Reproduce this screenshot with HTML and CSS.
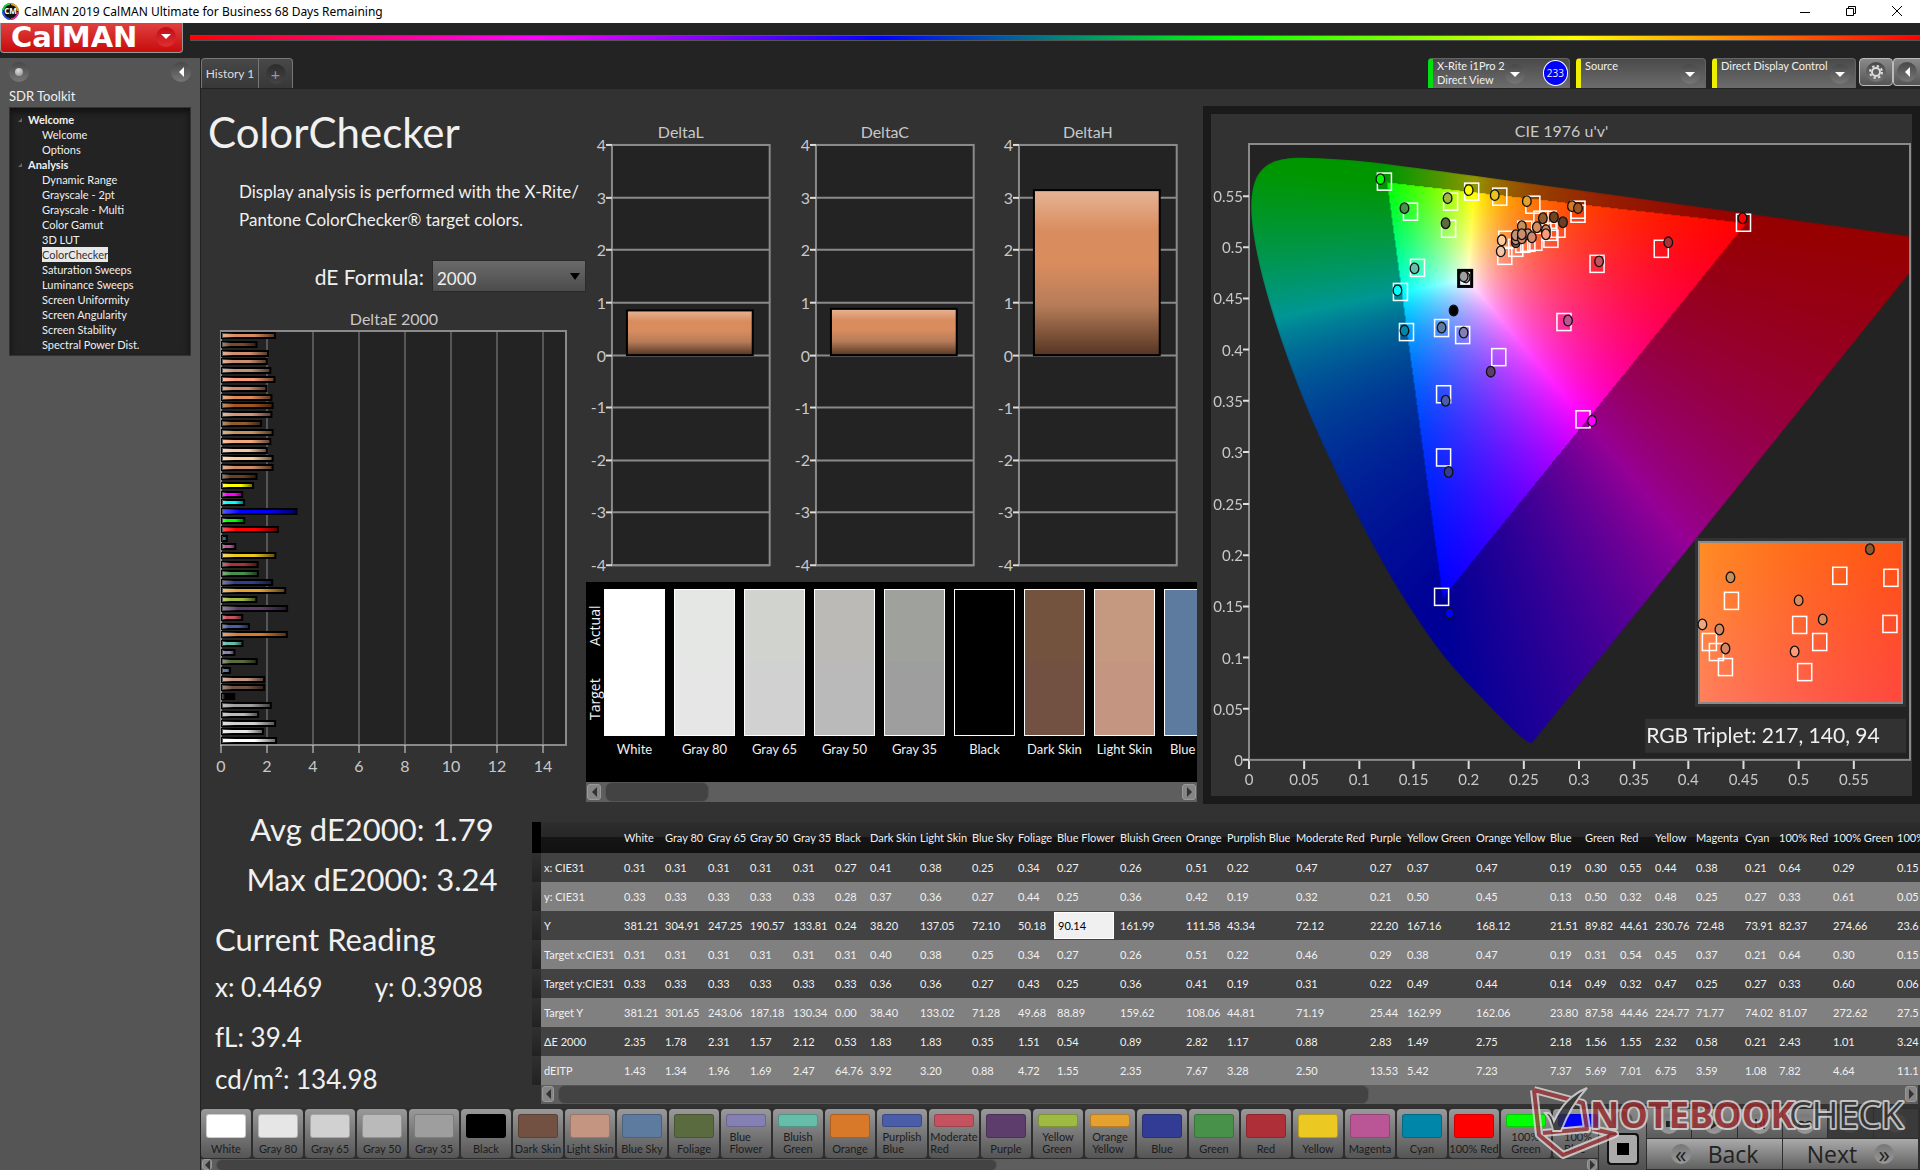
FILE: index.html
```html
<!DOCTYPE html>
<html lang="en">
  <head>
    <meta charset="utf-8" />
    <meta name="viewport" content="width=device-width, initial-scale=1" />
    <title>CalMAN 2019</title>
    <link rel="stylesheet" href="styles.css">
  </head>
  <body>
    <!-- Window title bar -->
    <div class="titlebar">
      <svg class="app-icon" width="17" height="17" viewBox="0 0 17 17" aria-hidden="true">
        <circle cx="8.500" cy="8.500" r="8" fill="#111" stroke="#0a8" />
        <path d="M1 7a8 8 0 0 1 7-6" stroke="#2c3" fill="none" stroke-width="2" />
        <path d="M9 1a8 8 0 0 1 7 7" stroke="#e0a020" fill="none" stroke-width="2" />
        <path d="M16 9a8 8 0 0 1-7 7" stroke="#d22a8a" fill="none" stroke-width="2" />
        <path d="M8 16a8 8 0 0 1-7-7" stroke="#2a50e0" fill="none" stroke-width="2" />
        <text x="8.500" y="11" text-anchor="middle">CM</text>
      </svg>
      <span class="window-title">CalMAN 2019 CalMAN Ultimate for Business 68 Days Remaining</span>
      <div class="window-buttons">
        <button aria-label="Minimize"><svg width="12" height="12"><path d="M1 7.500h10" stroke="#000" /></svg></button>
        <button aria-label="Restore"><svg width="12" height="12"><path d="M1.500 3.500h7v7h-7zM3.500 3.500v-2h7v7h-2" stroke="#000" fill="none" /></svg></button>
        <button aria-label="Close"><svg width="12" height="12"><path d="M1 1l10 10M11 1L1 11" stroke="#000" /></svg></button>
      </div>
    </div>

    <header class="brandbar">
      <button class="logo">CalMAN <span class="round red"><span class="tri-down"></span></span></button>
      <div class="rainbow"></div>
    </header>

    <div class="shell">
      <aside class="sidebar">
        <div class="sidebar-top">
          <button class="round" aria-label="Record"><span class="pearl"></span></button>
          <button class="round" aria-label="Collapse"><span class="tri-left"></span></button>
        </div>
        <div class="toolkit">SDR Toolkit</div>
        <nav class="tree">
          <strong>Welcome</strong>
          <a href="#">Welcome</a>
          <a href="#">Options</a>
          <strong>Analysis</strong>
          <a href="#">Dynamic Range</a>
          <a href="#">Grayscale - 2pt</a>
          <a href="#">Grayscale - Multi</a>
          <a href="#">Color Gamut</a>
          <a href="#">3D LUT</a>
          <a href="#" class="current">ColorChecker</a>
          <a href="#">Saturation Sweeps</a>
          <a href="#">Luminance Sweeps</a>
          <a href="#">Screen Uniformity</a>
          <a href="#">Screen Angularity</a>
          <a href="#">Screen Stability</a>
          <a href="#">Spectral Power Dist.</a>
        </nav>
      </aside>

      <div class="content">
        <div class="toolbar">
          <div class="tabs">
            <button class="tab">History 1</button>
            <button class="tab add" aria-label="Add tab"><span class="round dark">+</span></button>
          </div>
          <div class="devices">
            <div class="device meter">
              <span>X-Rite i1Pro 2<br>Direct View</span>
              <button class="round" aria-label="Meter options"><span class="tri-down"></span></button>
              <span class="count">233</span>
            </div>
            <div class="device source">
              <span>Source</span>
              <button class="round" aria-label="Source options"><span class="tri-down"></span></button>
            </div>
            <div class="device display">
              <span>Direct Display Control</span>
              <button class="round" aria-label="Display options"><span class="tri-down"></span></button>
            </div>
            <button class="tool" aria-label="Settings">
              <span class="round">
                <svg width="16" height="16" viewBox="-8 -8 16 16"><circle r="4" fill="none" stroke="#ddd" stroke-width="2" /><circle r="6" fill="none" stroke="#ddd" stroke-width="2" stroke-dasharray="2.400 2.310" /></svg>
              </span>
            </button>
            <button class="tool last" aria-label="Collapse toolbar"><span class="round"><span class="tri-left"></span></span></button>
          </div>
        </div>

        <main class="workspace">
          <div class="upper">
            <section class="summary">
              <h1>ColorChecker</h1>
              <p>Display analysis is performed with the X-Rite/<br>Pantone ColorChecker&reg; target colors.</p>
              <div class="formula">
                <label for="formula">dE Formula:</label>
                <div class="select-box">
                  <select id="formula"><option>2000</option></select>
                </div>
              </div>
              <svg id="deltaE" class="chart" viewBox="0 0 385 480"></svg>
            </section>

            <section class="middle">
              <div class="deltas" id="deltas"></div>
              <div class="swatches">
                <div class="swatch-row">
                  <div class="side-labels"><span>Target</span><span>Actual</span></div>
                  <div class="swatch-list" id="swatches"></div>
                </div>
                <div class="scrollbar tall"><button aria-label="Scroll left"><span class="tri-left"></span></button><span class="thumb short"></span><button aria-label="Scroll right"><span class="tri-right"></span></button></div>
              </div>
            </section>

            <section class="cie">
              <h2>CIE 1976 u'v'</h2>
              <div class="plot">
                <canvas id="locus" width="659" height="614"></canvas>
                <canvas id="detail" width="203" height="161"></canvas>
                <svg id="ciePoints" viewBox="0 0 659 614"></svg>
              </div>
            </section>
          </div>

          <div class="lower">
            <section class="reading">
              <div class="big">Avg dE2000: 1.79</div>
              <div class="big">Max dE2000: 3.24</div>
              <h3>Current Reading</h3>
              <div class="pair"><span>x: 0.4469</span><span>y: 0.3908</span></div>
              <div class="fl">fL: 39.4</div>
              <div>cd/m²: 134.98</div>
            </section>
            <section class="results">
              <div class="table-clip"><table id="results"></table></div>
              <div class="scrollbar"><button aria-label="Scroll left"><span class="tri-left"></span></button><span class="thumb wide"></span><button aria-label="Scroll right"><span class="tri-right"></span></button></div>
            </section>
          </div>
        </main>

        <footer class="footer">
          <div class="patterns">
            <div class="pattern-list" id="patterns"></div>
            <div class="scrollbar thin"><button aria-label="Scroll left"><span class="tri-left"></span></button><span class="thumb half"></span><button aria-label="Scroll right"><span class="tri-right"></span></button></div>
          </div>
          <div class="stop-box">
            <span class="round up"></span>
            <button class="stop" aria-label="Show pattern"></button>
          </div>
          <div class="transport">
            <div class="transport-row">
              <button aria-label="Stop"><span class="round"><svg width="12" height="12"><path d="M3 3h6v6H3z" /></svg></span></button>
              <button aria-label="Play"><span class="round"><svg width="12" height="12"><path d="M3 1l8 5-8 5z" /></svg></span></button>
              <button aria-label="Step"><span class="round"><svg width="12" height="12"><path d="M1 1h2v10H1zM9 1h2v10H9zM4 6l4-3v6z" /></svg></span></button>
              <button aria-label="Loop"><span class="round"><svg width="14" height="12"><path d="M7 6C5 3 1 3 1 6s4 3 6 0 6-3 6 0-4 3-6 0" fill="none" stroke="#222" stroke-width="2" /></svg></span></button>
              <button aria-label="Refresh" disabled><span class="round dark"></span></button>
              <button aria-label="More" disabled><span class="round dark"></span></button>
            </div>
            <div class="nav-row">
              <button><span class="round">«</span>Back</button>
              <button>Next<span class="round">»</span></button>
            </div>
          </div>
          <!-- Watermark lies over the footer -->
          <svg class="watermark" width="384" height="76" viewBox="0 0 384 76" aria-hidden="true">
            <g fill="none" stroke-linejoin="round">
              <path d="M5 5L54 18L58 44L14 48M5 5L10 50L34 70L86 49L64 44" stroke="#ddd" stroke-width="8" />
              <path d="M5 5L54 18L58 44L14 48M5 5L10 50L34 70L86 49L64 44" stroke="#a33a3d" stroke-width="4" />
            </g>
            <path d="M16 28q6-2 9 8Q36 12 58 3Q42 20 32 46h-8Q22 34 16 28z" fill="#333" stroke="#ddd" stroke-width="2" />
            <text x="61" y="43" class="mark-red">NOTEBOOK</text>
            <text x="260" y="43" class="mark-gray">CHECK</text>
          </svg>
        </footer>
      </div>
    </div>
    <script src="script.js"></script>
  </body>
</html>
```
FILE: styles.css
```css
:root {
  --bg: #323232;
  --dark: #232323;
  --panel: #555555;
  --line: #8a8a8a;
  --text: #f0f0f0;
  --muted: #c8c8c8;
  --font: Lato, "Open Sans", sans-serif;
  --font-wide: "Open Sans", sans-serif;
}

*,
*::before,
*::after {
  margin: 0;
  padding: 0;
  box-sizing: border-box;
}

body {
  min-height: 100vh;
  display: flex;
  flex-direction: column;
  font-family: var(--font);
  font-size: 11px;
  color: var(--text);
  background: var(--dark);
  overflow-x: hidden;
}

button {
  font: inherit;
  color: inherit;
  border: 0;
  background: none;
}

/* Title bar */
.titlebar {
  display: flex;
  align-items: center;
  height: 23px;
  padding-left: 2px;
  color: #000;
  background: #fff;
}

.app-icon text {
  font: bold 8px var(--font-wide);
  fill: #fff;
}

.window-title {
  flex: 1;
  margin-left: 5px;
  font-family: "Noto Sans", sans-serif;
  font-size: 12px;
}

.window-buttons {
  display: flex;
}

.window-buttons button {
  width: 46px;
  height: 22px;
}

/* Brand bar */
.brandbar {
  display: flex;
  height: 35px;
}

.logo {
  display: flex;
  align-items: center;
  justify-content: space-between;
  width: 183px;
  height: 30px;
  padding: 0 6px 2px 10px;
  font: bold 29px/24px "DejaVu Sans", sans-serif;
  color: #fff;
  background: linear-gradient(#e04040, #c80c0c);
  border: 1px solid #999;
  border-top: 0;
  border-radius: 0 0 4px 4px;
}

.rainbow {
  flex: 1;
  height: 6px;
  margin: 12px 0 0 7px;
  border: solid #555;
  border-width: 1px 0;
  background: linear-gradient(90deg, #f00, #f0f 20%, #00f 40%, #0f0 60%, #ff0 80%, #f00);
}

/* Round glossy buttons */
.round {
  display: inline-flex;
  align-items: center;
  justify-content: center;
  flex: none;
  width: 20px;
  height: 20px;
  border-radius: 50%;
  background: linear-gradient(#484848, #777);
}

.round.red {
  background: linear-gradient(#c00a18, #e03030);
}

.round.dark {
  font-size: 16px;
  color: #999;
  background: linear-gradient(#2c2c2c, #444);
}

.pearl {
  width: 8px;
  height: 8px;
  border-radius: 50%;
  background: radial-gradient(circle at 40% 30%, #ddd, #888);
}

.tri-left,
.tri-right {
  border: 5px solid transparent;
  border-left-width: 0;
  border-right-color: #fff;
}

.tri-right {
  border-left-width: 5px;
  border-right-width: 0;
  border-left-color: #fff;
}

.tri-down {
  border: 5px solid transparent;
  border-bottom-width: 0;
  border-top-color: #fff;
}

/* Shell */
.shell {
  flex: 1;
  display: grid;
  grid-template-columns: 201px minmax(0, 1fr);
}

.sidebar {
  padding: 4px 9px;
  background: var(--panel);
  border-right: 1px solid #222;
}

.sidebar-top {
  display: flex;
  justify-content: space-between;
}

.toolkit {
  margin: 6px 0 3px;
  font-size: 13px;
  line-height: 16px;
}

.tree {
  display: flex;
  flex-direction: column;
  align-items: flex-start;
  padding: 4px 0 3px 18px;
  line-height: 15px;
  background: var(--dark);
  border: 1px solid #333;
  box-shadow: inset 0 4px 6px #111;
}

.tree strong {
  display: flex;
  align-items: center;
  gap: 6px;
  height: 15px;
  margin-left: -10px;
}

.tree strong::before {
  content: "";
  border: 2px solid #666;
  border-top-color: transparent;
  border-left-color: transparent;
}

.tree a {
  margin-left: 14px;
  color: var(--text);
  text-decoration: none;
}

.tree .current {
  color: #333;
  background: #e8e8e8;
}

.content {
  display: flex;
  flex-direction: column;
  background: var(--bg);
}

/* Tabs and devices */
.toolbar {
  display: flex;
  justify-content: space-between;
  height: 31px;
  padding-bottom: 1px;
  background: var(--dark);
}

.tabs,
.devices {
  display: flex;
}

.tab {
  width: 58px;
  font-size: 12px;
  white-space: nowrap;
  color: #ddd;
  background: linear-gradient(#484848, #383838);
  border: 1px solid #777;
  border-bottom: 0;
  border-radius: 4px 0 0 0;
}

.tab.add {
  width: 34px;
  border-left: 0;
  border-radius: 0 4px 0 0;
}

.device {
  display: flex;
  justify-content: space-between;
  margin-right: 6px;
  padding: 0 5px 0 4px;
  line-height: 14px;
  white-space: nowrap;
  background: linear-gradient(#4a4a4a, #6c6c6c);
  border: 1px solid #666;
  border-left: 5px solid #ee0;
  border-bottom: 0;
  border-radius: 4px 4px 0 0;
}

.device .round {
  margin-top: 5px;
}

.meter {
  width: 142px;
  padding-right: 1px;
  border-left-color: #0d1;
}

.meter .round {
  margin-left: auto;
  margin-right: 18px;
}

.source {
  width: 130px;
}

.display {
  width: 144px;
  margin-right: 3px;
}

.count {
  width: 26px;
  height: 26px;
  margin-top: 1px;
  font: 10px/24px var(--font-wide);
  text-align: center;
  background: #00f;
  border: 1px solid #fff;
  border-radius: 50%;
}

.tool {
  width: 34px;
  height: 28px;
  background: linear-gradient(#8a8a8a, #555);
  border: 1px solid #bbb;
  border-radius: 4px;
}

.tool.last {
  width: 27px;
  border-right: 0;
  border-radius: 4px 0 0 4px;
}

/* Upper part of the workspace */
.workspace {
  flex: 1;
}

.upper {
  display: grid;
  grid-template-columns: minmax(0, 385fr) minmax(0, 617fr) minmax(0, 717fr);
}

.summary {
  padding-top: 15px;
}

h1 {
  padding-left: 7px;
  font-size: 42px;
  font-weight: normal;
  line-height: 56px;
}

.summary p {
  margin-top: 18px;
  padding-left: 38px;
  font-size: 17px;
  line-height: 28px;
  white-space: nowrap;
}

.formula {
  display: flex;
  justify-content: flex-end;
  align-items: center;
  gap: 8px;
  margin: 26px 0 7px;
  font-size: 21px;
}

.select-box {
  position: relative;
  width: 154px;
}

.select-box::after {
  content: "";
  position: absolute;
  top: 13px;
  right: 6px;
  border: 5px solid transparent;
  border-top: 7px solid #000;
  border-bottom: 0;
}

.select-box select {
  display: block;
  width: 100%;
  height: 32px;
  padding: 4px 4px 0;
  font: 17px var(--font);
  color: var(--text);
  background: linear-gradient(#6a6a6a, #4c4c4c);
  border: 1px solid #2a2a2a;
  appearance: none;
}

.chart {
  display: block;
  width: 100%;
}

svg text {
  font-size: 16px;
  fill: var(--muted);
}

.middle {
  padding: 26px 6px 0 0;
}

.deltas {
  display: grid;
  grid-template-columns: repeat(3, minmax(0, 1fr));
}

.swatches {
  background: #000;
}

.swatch-row {
  display: flex;
  height: 200px;
  padding-top: 7px;
}

.side-labels {
  display: flex;
  justify-content: space-around;
  width: 18px;
  height: 147px;
  font: 14px/18px var(--font-wide);
  writing-mode: vertical-rl;
  transform: rotate(180deg);
}

.swatch-list {
  flex: 1;
  display: flex;
  gap: 9px;
  overflow: hidden;
}

.swatch {
  flex: none;
  width: 61px;
  font-size: 13px;
  line-height: 26px;
  text-align: center;
  white-space: nowrap;
}

.swatch i {
  display: block;
  height: 147px;
  border: 1px solid #fff;
}

/* Scroll bars */
.scrollbar {
  display: flex;
  align-items: center;
  gap: 4px;
  height: 19px;
  padding: 0 1px;
  background: #5e5e5e;
}

.scrollbar button {
  display: flex;
  align-items: center;
  justify-content: center;
  width: 12px;
  height: 16px;
  background: #858585;
  border: 1px solid #999;
  border-radius: 3px;
}

.scrollbar button:last-child {
  margin-left: auto;
}

.scrollbar .tri-left {
  border-right-color: #333;
}

.scrollbar .tri-right {
  border-left-color: #333;
}

.thumb {
  height: 100%;
  background: #434343;
  border: 1px solid #555;
  border-radius: 7px;
}

.thumb.short {
  width: 17%;
}

.thumb.wide {
  width: 59%;
}

.thumb.half {
  width: 56%;
}

.scrollbar.tall {
  height: 20px;
}

.scrollbar.tall button {
  width: 14px;
}

.scrollbar.thin {
  height: 12px;
}

.scrollbar.thin button {
  width: 10px;
  height: 11px;
}

/* CIE diagram */
.cie {
  margin-top: 17px;
  padding: 6px 2px 36px 38px;
  border: 8px solid #1a1a1a;
}

.cie h2 {
  padding-right: 36px;
  font-size: 16px;
  font-weight: normal;
  line-height: 22px;
  text-align: center;
  color: var(--muted);
}

.plot {
  position: relative;
  margin-top: 2px;
  background: var(--dark);
}

.plot canvas {
  display: block;
  width: 100%;
}

.plot #detail {
  position: absolute;
  right: 1%;
  bottom: 9%;
  width: 31%;
  border: 2px solid var(--line);
  box-shadow: 0 0 0 3px #323232;
}

.plot svg {
  position: absolute;
  inset: 0;
  width: 100%;
  overflow: visible;
}

.plot text {
  font-size: 15px;
}

.plot .triplet {
  font-size: 21px;
  fill: var(--text);
}

/* Readings and table */
.lower {
  display: grid;
  grid-template-columns: 331px minmax(0, 1fr);
}

.reading {
  padding-left: 14px;
  font-size: 26px;
  line-height: 42px;
}

.big {
  padding-right: 3px;
  font-size: 31px;
  line-height: 50px;
  text-align: center;
}

.reading h3 {
  margin-top: 13px;
  font-size: 31px;
  font-weight: normal;
  line-height: 44px;
}

.pair {
  display: flex;
  gap: 52px;
  margin-top: 5px;
}

.fl {
  margin-top: 8px;
}

.results {
  margin-top: 18px;
}

.table-clip {
  overflow: hidden;
  padding-right: 2px;
}

.results .scrollbar {
  margin: 0 2px 4px 9px;
}

table {
  table-layout: fixed;
  border-collapse: collapse;
}

th,
td {
  height: 29px;
  padding-left: 3px;
  font-size: 11px;
  font-weight: normal;
  text-align: left;
  white-space: nowrap;
}

thead th {
  height: 31px;
  background: linear-gradient(#2e2e2e 0, #262626 50%, #151515 50%, #111 100%);
}

thead .grip {
  background: #000;
}

tbody tr {
  background: #424242;
}

tbody tr:nth-child(even) {
  background: #808080;
}

.grip {
  background: linear-gradient(#303030, #222);
}

td input {
  display: block;
  width: 60px;
  height: 27px;
  margin-left: -3px;
  padding-left: 3px;
  font: 11px var(--font);
  color: #000;
  background: #f0f0f0;
  border: 1px solid #fff;
}

/* Footer */
.footer {
  position: relative;
  display: grid;
  grid-template-columns: minmax(0, 1fr) 48px 274px;
  height: 63px;
  padding-top: 1px;
  background: #2e2e2e;
}

.patterns {
  overflow: hidden;
}

.pattern-list {
  display: flex;
  gap: 2px;
  height: 50px;
}

.pattern {
  flex: none;
  display: flex;
  flex-direction: column;
  align-items: center;
  width: 50px;
  height: 49px;
  padding: 5px 0 3px;
  color: #1c1c1c;
  line-height: 12px;
  white-space: nowrap;
  background: linear-gradient(#999, #555);
  border-radius: 4px;
}

.pattern i {
  flex: 1;
  width: 40px;
  max-height: 24px;
  margin-bottom: auto;
  border: 1px solid rgba(0, 0, 0, 0.2);
  border-radius: 3px;
}

.pattern span {
  padding-top: 4px;
  text-align: left;
}

.stop-box {
  display: flex;
  flex-direction: column;
  align-items: center;
  justify-content: space-between;
  margin-left: 1px;
  padding: 2px 0 6px;
  background: linear-gradient(#888, #505050);
}

.stop {
  width: 32px;
  height: 32px;
  background: #000;
  border: 2px solid #111;
  border-radius: 4px;
  box-shadow: inset 0 0 0 8px #aaa;
}

.transport {
  display: flex;
  flex-direction: column;
  gap: 1px;
  padding: 0 2px 2px 1px;
}

.transport-row,
.nav-row {
  flex: 1;
  display: flex;
  gap: 1px;
}

.transport button,
.nav-row button {
  flex: 1;
  color: #222;
  background: linear-gradient(#888, #5a5a5a);
}

.transport button:disabled {
  background: #3a3a3a;
}

.transport .nav-row button {
  display: flex;
  align-items: center;
  justify-content: center;
  gap: 17px;
  font: 23px/20px var(--font-wide);
  background: linear-gradient(#aaa, #606060);
}

.transport .round {
  background: linear-gradient(#777, #999);
}

.transport :disabled .round {
  background: #444;
}

.transport svg {
  fill: #222;
}

.watermark {
  position: absolute;
  right: 7px;
  bottom: 10px;
  opacity: 0.8;
}

.watermark text {
  font: bold 36px var(--font-wide);
  fill: #9c2c30;
  stroke: #ddd;
  stroke-width: 4px;
  stroke-linejoin: round;
  paint-order: stroke;
}

.watermark .mark-gray {
  font-weight: normal;
  fill: #333;
}
```
FILE: script.js
```js
"use strict";

const SVG_NS = "http://www.w3.org/2000/svg";

/**
 * Appends an SVG element with the given attributes to a parent.
 */
const draw = (parent, tag, attrs, text) => {
  const el = document.createElementNS(SVG_NS, tag);
  Object.entries(attrs).forEach(([key, value]) => el.setAttribute(key, value));
  if (text !== undefined) el.textContent = text;
  parent.appendChild(el);
  return el;
};

const patches = [
  ["White", "#ffffff"], ["Gray 80", "#e6e6e6"], ["Gray 65", "#d1d1d1"],
  ["Gray 50", "#bababa"], ["Gray 35", "#9e9e9e"], ["Black", "#000000"],
  ["Dark Skin", "#735142"], ["Light Skin", "#c49682"], ["Blue Sky", "#5d7a9f"],
  ["Foliage", "#5a6b40"], ["Blue Flower", "#8580b3"], ["Bluish Green", "#66bda9"],
  ["Orange", "#d87829"], ["Purplish Blue", "#4a5da8"], ["Moderate Red", "#c4535f"],
  ["Purple", "#5c3d6b"], ["Yellow Green", "#9fba42"], ["Orange Yellow", "#e5a130"],
  ["Blue", "#333c94"], ["Green", "#48914a"], ["Red", "#af2f39"],
  ["Yellow", "#ecc822"], ["Magenta", "#bb5696"], ["Cyan", "#0086a9"],
  ["100% Red", "#ff0000"], ["100% Green", "#00ff00"], ["100% Blue", "#0000ff"],
];

/* DeltaE bars, from top to bottom */
const bars = [
  [2.3, "#d98c5e"], [1.5, "#7b4a28"], [2, "#d08e6c"], [1.95, "#c98e6e"], [2.1, "#c49376"],
  [2.28, "#fb9b78"], [1.93, "#d38867"], [2.15, "#d98955"], [2.2, "#a3561f"], [2.15, "#d1957a"],
  [1.7, "#8f5b2f"], [2.2, "#c6905c"], [2.1, "#f2a67e"], [1.95, "#f7c4a5"], [2.2, "#ffcc99"],
  [2.2, "#cf8a66"], [1.5, "#6e3e22"], [1.35, "#ffff00"], [0.88, "#ff00ff"], [0.96, "#00ffff"],
  [3.24, "#0000ff"], [0.97, "#00ff00"], [2.43, "#ff0000"], [0.21, "#0086a9"], [0.58, "#bb5696"],
  [2.32, "#ecc822"], [1.55, "#af2f39"], [1.56, "#48914a"], [2.18, "#333c94"], [2.75, "#e5a130"],
  [1.49, "#9fba42"], [2.83, "#5c3d6b"], [0.88, "#c4535f"], [1.17, "#4a5da8"], [2.82, "#d87829"],
  [0.89, "#66bda9"], [0.54, "#8580b3"], [1.51, "#5a6b40"], [0.35, "#5d7a9f"], [1.83, "#c49682"],
  [1.83, "#735142"], [0.53, "#000000"], [2.12, "#9e9e9e"], [1.57, "#bababa"], [2.31, "#d1d1d1"],
  [1.78, "#e6e6e6"], [2.35, "#ffffff"],
];

const drawDeltaE = () => {
  const svg = document.getElementById("deltaE");
  const left = 20, top = 32, width = 345, height = 414;
  const unit = width / 15;
  const shade = draw(svg, "linearGradient", { id: "shade" });
  draw(shade, "stop", { offset: 0, "stop-color": "#fff", "stop-opacity": 0.35 });
  draw(shade, "stop", { offset: 0.25, "stop-color": "#fff", "stop-opacity": 0 });
  draw(shade, "stop", { offset: 0.6, "stop-color": "#000", "stop-opacity": 0 });
  draw(shade, "stop", { offset: 1, "stop-color": "#000", "stop-opacity": 0.6 });

  draw(svg, "text", { x: 193, y: 26, "text-anchor": "middle" }, "DeltaE 2000");
  draw(svg, "rect", { x: left, y: top, width, height, fill: "#232323", stroke: "#8a8a8a", "stroke-width": 2 });
  for (let n = 0; n < 15; n += 2) {
    const x = left + n * unit;
    draw(svg, "path", { d: `M${x} ${top}V${top + height}`, stroke: "#8a8a8a" });
    draw(svg, "path", { d: `M${x} ${top + height}v8`, stroke: "#ddd" });
    draw(svg, "text", { x, y: 473, "text-anchor": "middle" }, n);
  }
  const pitch = height / bars.length;
  bars.forEach(([value, color], i) => {
    const box = { x: left + 1, y: Math.round(top + 2 + i * pitch), width: value * unit, height: 5 };
    draw(svg, "rect", { ...box, fill: color, stroke: "#000", "stroke-width": 2 });
    draw(svg, "rect", { ...box, fill: "url(#shade)" });
  });
};

const drawDelta = (name, value) => {
  const svg = draw(document.getElementById("deltas"), "svg", { class: "chart", viewBox: "0 0 204 468" });
  const left = 26, top = 30, width = 158, height = 421;
  const unit = height / 8;
  const id = `fade${name}`;
  const fade = draw(svg, "linearGradient", { id, x2: 0, y2: 1 });
  [[0, "#e6b496"], [0.25, "#d98c5e"], [0.45, "#d98c5e"], [0.7, "#b67c58"], [1, "#553523"]].forEach(([offset, color]) =>
    draw(fade, "stop", { offset, "stop-color": color })
  );
  draw(svg, "text", { x: 95, y: 23, "text-anchor": "middle" }, name);
  draw(svg, "rect", { x: left, y: top, width, height, fill: "#232323", stroke: "#8a8a8a", "stroke-width": 2 });
  for (let n = 4; n >= -4; n--) {
    const y = Math.round(top + (4 - n) * unit);
    draw(svg, "path", { d: `M${left} ${y}h${width}`, stroke: "#8a8a8a", "stroke-width": 2 });
    draw(svg, "path", { d: `M${left - 6} ${y}h6`, stroke: "#ddd", "stroke-width": 2 });
    draw(svg, "text", { x: left - 6, y: y + 6, "text-anchor": "end" }, n);
  }
  const h = value * unit;
  draw(svg, "rect", { x: left + 15, y: top + height / 2 - h, width: 126, height: h, fill: `url(#${id})`, stroke: "#000", "stroke-width": 2 });
};

const drawSwatches = () => {
  const actual = ["#ffffff", "#e5e7e4", "#d1d3cf", "#bbbab7", "#9fa19c", "#000000", "#73533d", "#c49980", "#5d7a9f"];
  const list = document.getElementById("swatches");
  patches.slice(0, 9).forEach(([name, color], i) => {
    const item = document.createElement("div");
    item.className = "swatch";
    item.innerHTML = `<i style="background: linear-gradient(${actual[i]} 50%, ${color} 50%)"></i>${name}`;
    list.appendChild(item);
  });
};

/* Spectral locus as xy chromaticities */
const locus = [
  [0.1741, 0.005], [0.1714, 0.0051], [0.1644, 0.0109], [0.1566, 0.0177], [0.144, 0.0297],
  [0.1355, 0.0399], [0.1241, 0.0578], [0.1096, 0.0868], [0.0913, 0.1327], [0.0687, 0.2007],
  [0.0454, 0.295], [0.0235, 0.4127], [0.0082, 0.5384], [0.0039, 0.6548], [0.0139, 0.7502],
  [0.0389, 0.812], [0.0743, 0.8338], [0.1142, 0.8262], [0.1547, 0.8059], [0.2296, 0.7543],
  [0.3016, 0.6923], [0.3731, 0.6245], [0.4441, 0.5547], [0.5125, 0.4866], [0.5752, 0.4242],
  [0.627, 0.3725], [0.6658, 0.334], [0.6915, 0.3083], [0.719, 0.2809], [0.7347, 0.2653],
];

/**
 * Brightest linear RGB colour at a u'v' point, dimmed outside the gamut.
 */
const colorAt = (u, v) => {
  const d = 6 * u - 16 * v + 12;
  const x = (9 * u) / d;
  const y = (4 * v) / d;
  const X = x / y;
  const Z = (1 - x - y) / y;
  const rgb = [
    3.2406 * X - 1.5372 - 0.4986 * Z,
    -0.9689 * X + 1.8758 + 0.0415 * Z,
    0.0557 * X - 0.204 + 1.057 * Z,
  ];
  const level = Math.min(...rgb) < 0 ? 150 : 255;
  const max = Math.max(...rgb);
  return rgb.map((c) => (level * Math.max(0, c)) / max);
};

/**
 * Fills a canvas with the chromaticity colours of a u'v' range.
 */
const paint = (canvas, u0, u1, v0, v1) => {
  const { width, height } = canvas;
  const ctx = canvas.getContext("2d");
  const image = ctx.createImageData(width, height);
  for (let y = 0; y < height; y++) {
    for (let x = 0; x < width; x++) {
      const u = u0 + ((u1 - u0) * x) / width;
      const v = v1 - ((v1 - v0) * (y + 0.5)) / height;
      image.data.set([...colorAt(u, v), 255], (y * width + x) * 4);
    }
  }
  ctx.putImageData(image, 0, 0);
  return ctx;
};

const drawLocus = () => {
  const canvas = document.getElementById("locus");
  const ctx = paint(canvas, 0, 0.6, 0, 0.6);
  ctx.globalCompositeOperation = "destination-in";
  ctx.beginPath();
  const points = locus.map(([x, y]) => {
    const d = -2 * x + 12 * y + 3;
    return [((4 * x) / d / 0.6) * canvas.width, (1 - (9 * y) / d / 0.6) * canvas.height];
  });
  ctx.moveTo(...points[0]);
  for (let i = 1; i < points.length - 1; i++) {
    const [x, y] = points[i];
    const [nx, ny] = points[i + 1];
    ctx.quadraticCurveTo(x, y, (x + nx) / 2, (y + ny) / 2);
  }
  ctx.lineTo(...points[points.length - 1]);
  ctx.fill();
  paint(document.getElementById("detail"), 0.2413, 0.2827, 0.4924, 0.5276);
};

/* Marker centres in plot units */
const targets = [
  [135, 37], [161, 67], [201, 57], [222, 47], [250, 52], [283, 60], [328, 65], [328, 69],
  [199, 84], [168, 123], [151, 147], [157, 187], [192, 183], [213, 190], [249, 212],
  [194, 249], [347, 119], [411, 104], [493, 78], [314, 177], [333, 274], [194, 312],
  [192, 451], [256, 95], [255, 111], [266, 103], [275, 85], [285, 97], [301, 94],
  [308, 84], [300, 87], [299, 75], [273, 99], [278, 98], [291, 75],
  [589, 430], [640, 432], [481, 455], [549, 479], [639, 478], [569, 496],
  [459, 496], [466, 506], [475, 521], [554, 526],
];

const readings = [
  [131, 35, "#00ff00"], [155, 64, "#48914a"], [198, 54, "#9fba42"], [219, 46, "#ffff00"],
  [245, 51, "#e9c421"], [277, 57, "#e5a130"], [322, 62, "#d87829"], [328, 64, "#a3561f"],
  [196, 79, "#5a6b40"], [165, 124, "#66bda9"], [148, 146, "#00ffff"], [155, 186, "#0086a9"],
  [192, 183, "#5d7a9f"], [214, 188, "#8580b3"], [204, 166, "#000000"], [241, 227, "#5c3d6b"],
  [196, 256, "#4a5da8"], [349, 117, "#c4535f"], [418, 98, "#af2f39"], [492, 74, "#ff0000"],
  [318, 176, "#bb5696"], [342, 276, "#ff00ff"], [199, 327, "#333c94"], [200, 468, "#0000ff"],
  [216, 133, "#bababa"], [214, 132, "#9e9e9e"], [252, 96, "#ffcc99"], [251, 107, "#f7c4a5"],
  [266, 98, "#735142"], [266, 95, "#c98e6e"], [272, 82, "#c6905c"], [266, 91, "#c49376"],
  [278, 90, "#c49682"], [272, 94, "#d38867"], [272, 90, "#c98e6e"], [282, 93, "#d38867"],
  [287, 83, "#d98c5e"], [296, 86, "#d38867"], [296, 90, "#fb9b78"], [293, 74, "#8f5b2f"],
  [304, 73, "#73421e"], [313, 78, "#6e3e22"],
  [619, 404, "#8f5b2f"], [480, 432, "#c6905c"], [548, 455, "#d98c5e"], [572, 474, "#d98955"],
  [452, 479, "#f2a67e"], [469, 484, "#cf8a66"], [475, 503, "#d38867"], [544, 506, "#fb9b78"],
];

const drawCiePoints = () => {
  const svg = document.getElementById("ciePoints");
  draw(svg, "rect", { x: 0, y: 0, width: 659, height: 614, fill: "none", stroke: "#8a8a8a", "stroke-width": 2 });
  for (let i = 0; i < 12; i++) {
    const label = String(i * 5 / 100);
    const x = Math.round(i * 54.8);
    const y = Math.round(614 - i * 51.1);
    draw(svg, "path", { d: `M${x} 615v8M0 ${y}h-6`, stroke: "#ddd", "stroke-width": 2 });
    draw(svg, "text", { x, y: 639, "text-anchor": "middle" }, label);
    draw(svg, "text", { x: -6, y: y + 6, "text-anchor": "end" }, label);
  }
  targets.forEach(([x, y]) =>
    draw(svg, "rect", { x: x - 7, y: y - 8, width: 14, height: 17, fill: "none", stroke: "#fff", "stroke-width": 1.5 })
  );
  draw(svg, "rect", { x: 209, y: 126, width: 13, height: 16, fill: "none", stroke: "#000", "stroke-width": 3 });
  readings.forEach(([cx, cy, fill]) => draw(svg, "ellipse", { cx, cy, rx: 4.3, ry: 5.3, fill, stroke: "#111", "stroke-width": 1.3 }));
  draw(svg, "rect", { x: 395, y: 573, width: 260, height: 34, fill: "#323232" });
  draw(svg, "text", { x: 396, y: 597, class: "triplet" }, "RGB Triplet: 217, 140, 94");
};

/* Measurements, one list for each row of the table */
const widths = [9, 80, 41, 43, 42, 43, 42, 35, 50, 52, 46, 39, 63, 66, 41, 69, 74, 37, 69, 74, 35, 35, 35, 41, 49, 34, 54, 64, 57];
const rows = {
  "x: CIE31": "0.31 0.31 0.31 0.31 0.31 0.27 0.41 0.38 0.25 0.34 0.27 0.26 0.51 0.22 0.47 0.27 0.37 0.47 0.19 0.30 0.55 0.44 0.38 0.21 0.64 0.29 0.15",
  "y: CIE31": "0.33 0.33 0.33 0.33 0.33 0.28 0.37 0.36 0.27 0.44 0.25 0.36 0.42 0.19 0.32 0.21 0.50 0.45 0.13 0.50 0.32 0.48 0.25 0.27 0.33 0.61 0.05",
  "Y": "381.21 304.91 247.25 190.57 133.81 0.24 38.20 137.05 72.10 50.18 90.14 161.99 111.58 43.34 72.12 22.20 167.16 168.12 21.51 89.82 44.61 230.76 72.48 73.91 82.37 274.66 23.6",
  "Target x:CIE31": "0.31 0.31 0.31 0.31 0.31 0.31 0.40 0.38 0.25 0.34 0.27 0.26 0.51 0.22 0.46 0.29 0.38 0.47 0.19 0.31 0.54 0.45 0.37 0.21 0.64 0.30 0.15",
  "Target y:CIE31": "0.33 0.33 0.33 0.33 0.33 0.33 0.36 0.36 0.27 0.43 0.25 0.36 0.41 0.19 0.31 0.22 0.49 0.44 0.14 0.49 0.32 0.47 0.25 0.27 0.33 0.60 0.06",
  "Target Y": "381.21 301.65 243.06 187.18 130.34 0.00 38.40 133.02 71.28 49.68 88.89 159.62 108.06 44.81 71.19 25.44 162.99 162.06 23.80 87.58 44.46 224.77 71.77 74.02 81.07 272.62 27.5",
  "ΔE 2000": "2.35 1.78 2.31 1.57 2.12 0.53 1.83 1.83 0.35 1.51 0.54 0.89 2.82 1.17 0.88 2.83 1.49 2.75 2.18 1.56 1.55 2.32 0.58 0.21 2.43 1.01 3.24",
  "dEITP": "1.43 1.34 1.96 1.69 2.47 64.76 3.92 3.20 0.88 4.72 1.55 2.35 7.67 3.28 2.50 13.53 5.42 7.23 7.37 5.69 7.01 6.75 3.59 1.08 7.82 4.64 11.1",
};

const fillTable = () => {
  const table = document.getElementById("results");
  table.style.width = `${widths.reduce((a, b) => a + b)}px`;
  const cols = widths.map((w) => `<col style="width: ${w}px">`).join("");
  const head = patches.map(([name]) => `<th scope="col">${name}</th>`).join("");
  const body = Object.entries(rows).map(([label, values]) => {
    const cells = values.split(" ").map((value) =>
      value === "90.14" ? `<td><input value="${value}" aria-label="Blue Flower Y"></td>` : `<td>${value}</td>`
    );
    return `<tr><td class="grip"></td><th scope="row">${label}</th>${cells.join("")}</tr>`;
  });
  table.innerHTML = `<colgroup>${cols}</colgroup><thead><tr><th class="grip"></th><th></th>${head}</tr></thead><tbody>${body.join("")}</tbody>`;
};

const fillPatterns = () => {
  const split = ["Blue Flower", "Bluish Green", "Purplish Blue", "Moderate Red", "Yellow Green", "Orange Yellow", "100% Green", "100% Blue"];
  const list = document.getElementById("patterns");
  patches.forEach(([name, color]) => {
    const button = document.createElement("button");
    button.className = "pattern";
    const label = split.includes(name) ? name.replace(" ", "<br>") : name;
    button.innerHTML = `<i style="background: ${color}"></i><span>${label}</span>`;
    list.appendChild(button);
  });
};

drawDeltaE();
drawDelta("DeltaL", 0.85);
drawDelta("DeltaC", 0.88);
drawDelta("DeltaH", 3.14);
drawSwatches();
drawLocus();
drawCiePoints();
fillTable();
fillPatterns();
```
